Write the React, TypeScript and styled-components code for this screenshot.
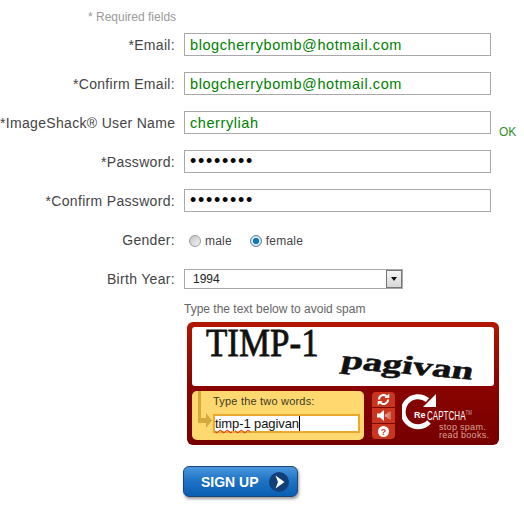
import React from "react";
import styled, { createGlobalStyle } from "styled-components";

const Global = createGlobalStyle`
  html, body { margin: 0; padding: 0; background: #fff; }
  body { font-family: "Liberation Sans", Arial, sans-serif; width: 524px; height: 506px; overflow: hidden; }
`;

const Form = styled.form`
  padding-top: 10px;
  display: flex;
  flex-direction: column;
`;
const Required = styled.div`
  margin: 0 0 9px 88px;
  height: 14px;
  font-size: 12px;
  line-height: 14px;
  color: #999;
`;
const Row = styled.div<{ $after?: number }>`
  display: flex;
  align-items: center;
  margin-bottom: ${(p) => p.$after ?? 16}px;
`;
const Label = styled.label`
  width: 176px;
  flex: none;
  box-sizing: border-box;
  text-align: right;
  padding-right: 1px;
  margin-right: 8px;
  font-size: 14px;
  line-height: 16px;
  letter-spacing: 0.32px;
  color: #444;
  white-space: nowrap;
`;
const TextBox = styled.input<{ $secret?: boolean }>`
  width: 307px;
  height: 23px;
  flex: none;
  box-sizing: border-box;
  border: 1px solid #a9a9a9;
  outline: none;
  padding: 0 5px;
  margin: 0;
  background: #fff;
  font-family: "Liberation Sans", Arial, sans-serif;
  font-size: ${(p) => (p.$secret ? 18 : 14.5)}px;
  letter-spacing: ${(p) => (p.$secret ? "1.7px" : "0.58px")};
  color: ${(p) => (p.$secret ? "#000" : "#008000")};
`;
const Ok = styled.span`
  margin: 14px 0 -5px 8px;
  font-size: 12px;
  line-height: 14px;
  color: #2f8f1f;
`;
const Choices = styled.div`
  display: flex;
  align-items: center;
  padding: 3px 0 0 5px;
`;
const Radio = styled.span<{ $on?: boolean }>`
  width: 12px;
  height: 12px;
  box-sizing: border-box;
  border-radius: 50%;
  border: 1px solid ${(p) => (p.$on ? "#5a7f9a" : "#9a9a9a")};
  background: ${(p) =>
    p.$on
      ? "radial-gradient(circle at 50% 50%, #1477b8 0 2.6px, #2a95cf 3px, #e8eef2 3.6px, #c9ced2 100%)"
      : "linear-gradient(135deg, #c4c4c4, #f4f4f4)"};
  margin-right: 4px;
  flex: none;
`;
const ChoiceText = styled.span`
  font-size: 12px;
  line-height: 14px;
  letter-spacing: 0.2px;
  color: #444;
  margin-right: 18px;
`;
const SelectBox = styled.div`
  width: 219px;
  height: 20px;
  box-sizing: border-box;
  border: 1px solid #a9a9a9;
  display: flex;
  align-items: center;
  justify-content: space-between;
  padding: 0 0 0 8px;
  font-size: 12px;
  color: #222;
`;
const SelectArrow = styled.span`
  width: 16px;
  height: 18px;
  box-sizing: border-box;
  border: 1px solid #777;
  background: linear-gradient(#f6f6f6, #d8d8d8);
  display: flex;
  align-items: center;
  justify-content: center;
  &::after {
    content: "";
    border-left: 3.5px solid transparent;
    border-right: 3.5px solid transparent;
    border-top: 4px solid #111;
  }
`;
const Hint = styled.div`
  margin: 0 0 6px 184px;
  font-size: 12px;
  line-height: 13px;
  color: #666;
`;
const Captcha = styled.div`
  margin-left: 187px;
  width: 312px;
  height: 123px;
  box-sizing: border-box;
  padding: 5px;
  border-radius: 6px;
  background: linear-gradient(#b31600 0, #8a0400 50%, #760000 100%);
  display: flex;
  flex-direction: column;
  gap: 5px;
`;
const Challenge = styled.div`
  height: 59px;
  background: #fff;
  border-radius: 3px;
  flex: none;
`;
const ChallengeArt = styled.svg`
  display: block;
  overflow: visible;
`;
const Lower = styled.div`
  display: flex;
  gap: 8px;
`;
const Panel = styled.div`
  position: relative;
  width: 172px;
  height: 49px;
  box-sizing: border-box;
  padding: 3px 4px 0 21px;
  border-radius: 5px;
  background: #ffd870;
`;
const PanelArrow = styled.svg`
  position: absolute;
  left: 3px;
  top: 0;
`;
const PanelLabel = styled.div`
  font-size: 11px;
  line-height: 14px;
  letter-spacing: 0.2px;
  color: #3a3a20;
  margin-bottom: 6px;
`;
const Answer = styled.div`
  width: 147px;
  height: 19px;
  box-sizing: border-box;
  border: 2px solid #e8a92c;
  background: #fff;
  padding-left: 0;
  font-size: 13px;
  line-height: 15px;
  letter-spacing: -0.1px;
  color: #111;
  white-space: nowrap;
`;
const Misspelled = styled.span`
  text-decoration: underline wavy #e02020 1px;
`;
const Caret = styled.span`
  border-right: 1px solid #000;
`;
const Tools = styled.div`
  width: 23px;
  height: 47px;
  margin-top: 1px;
  flex: none;
  border-radius: 4px;
  overflow: hidden;
  display: flex;
  flex-direction: column;
  gap: 1px;
  background: #7a0a00;
`;
const Tool = styled.div`
  flex: 1;
  background: #c9361f;
  display: flex;
  align-items: center;
  justify-content: center;
`;
const Logo = styled.div`
  position: relative;
  flex: 1;
  margin-left: -1px;
`;
const LogoMark = styled.svg`
  position: absolute;
  left: 0;
  top: 2px;
`;
const ReWord = styled.span`
  position: absolute;
  left: 12px;
  top: 19px;
  font-size: 9px;
  line-height: 10px;
  font-weight: bold;
  color: #fff;
`;
const Brand = styled.span`
  position: absolute;
  left: 25px;
  top: 18px;
  font-size: 13px;
  line-height: 14px;
  color: #fff;
  white-space: nowrap;
  transform: scaleX(0.62);
  transform-origin: 0 0;
`;
const Tm = styled.sup`
  font-size: 7px;
  line-height: 0;
  vertical-align: 5px;
  color: #d8a8a0;
`;
const Slogan = styled.span`
  position: absolute;
  left: 37px;
  top: 32px;
  font-size: 9px;
  line-height: 8px;
  letter-spacing: 0.3px;
  color: #d9a598;
  white-space: nowrap;
`;
const SignUp = styled.button`
  margin: 21px 0 0 183px;
  width: 115px;
  height: 31px;
  box-sizing: border-box;
  padding: 0 8px 0 17px;
  border: 1px solid #1d4474;
  border-radius: 6px;
  background: linear-gradient(#4a97dc 0, #1f74c6 45%, #0a5fb2 100%);
  box-shadow: 1px 2px 3px rgba(0, 0, 0, 0.4);
  display: flex;
  align-items: center;
  justify-content: space-between;
  font-family: "Liberation Sans", Arial, sans-serif;
  font-size: 14px;
  font-weight: bold;
  color: #fff;
`;

const App = () => (
  <>
    <Global />
    <Form onSubmit={(e) => e.preventDefault()}>
      <Required>* Required fields</Required>
      <Row>
        <Label>*Email:</Label>
        <TextBox readOnly value="blogcherrybomb@hotmail.com" />
      </Row>
      <Row>
        <Label>*Confirm Email:</Label>
        <TextBox readOnly value="blogcherrybomb@hotmail.com" />
      </Row>
      <Row>
        <Label>*ImageShack® User Name</Label>
        <TextBox readOnly value="cherryliah" />
        <Ok>OK</Ok>
      </Row>
      <Row>
        <Label>*Password:</Label>
        <TextBox $secret readOnly type="password" value="cherries" />
      </Row>
      <Row $after={19}>
        <Label>*Confirm Password:</Label>
        <TextBox $secret readOnly type="password" value="cherries" />
      </Row>
      <Row $after={21}>
        <Label>Gender:</Label>
        <Choices>
          <Radio />
          <ChoiceText>male</ChoiceText>
          <Radio $on />
          <ChoiceText>female</ChoiceText>
        </Choices>
      </Row>
      <Row $after={14}>
        <Label>Birth Year:</Label>
        <SelectBox>
          1994
          <SelectArrow />
        </SelectBox>
      </Row>
      <Hint>Type the text below to avoid spam</Hint>
      <Captcha>
        <Challenge>
          <ChallengeArt width="302" height="59" viewBox="0 0 302 59">
            <text transform="translate(14 29) scale(1 1.12)" fontFamily="'Liberation Serif', serif" fontSize="35" fill="#111" stroke="#111" strokeWidth="0.7">
              TIMP-1
            </text>
            <text transform="translate(148 41) rotate(5) skewX(-8) scale(1.5 1)" fontFamily="'Liberation Serif', serif" fontSize="26" fontWeight="bold" fill="#111" stroke="#111" strokeWidth="0.5">
              pagivan
            </text>
          </ChallengeArt>
        </Challenge>
        <Lower>
          <Panel>
            <PanelArrow width="18" height="49" viewBox="0 0 18 49">
              <path d="M3 0h3v27h5v-5l6 7.5-6 7.5v-5H3z" fill="#d4a93f" />
            </PanelArrow>
            <PanelLabel>Type the two words:</PanelLabel>
            <Answer>
              <Misspelled>timp-1</Misspelled> <Caret>pagivan</Caret>
            </Answer>
          </Panel>
          <Tools>
            <Tool>
              <svg width="13" height="13" viewBox="0 0 13 13" fill="none" stroke="#fff" strokeWidth="2">
                <path d="M2 6.5a4.5 4.5 0 0 1 7.5-3.3" />
                <path d="M11 6.5a4.5 4.5 0 0 1-7.5 3.3" />
                <path d="M7.5 5h4.8V.4zM5.5 8H.7v4.6z" fill="#fff" stroke="none" />
              </svg>
            </Tool>
            <Tool>
              <svg width="14" height="11" viewBox="0 0 14 11" fill="#fff">
                <path d="M0 3.5h3L7 0v11L3 7.5H0z" />
                <rect x="8.5" y="4" width="1" height="3" />
                <rect x="10.5" y="2.5" width="1" height="6" opacity="0.8" />
                <rect x="12.5" y="1.5" width="1" height="8" opacity="0.6" />
              </svg>
            </Tool>
            <Tool>
              <svg width="11" height="11" viewBox="0 0 11 11">
                <circle cx="5.5" cy="5.5" r="5.5" fill="#fff" />
                <text x="5.5" y="9" textAnchor="middle" fontFamily="'Liberation Sans', sans-serif" fontSize="9" fontWeight="bold" fill="#c9361f">?</text>
              </svg>
            </Tool>
          </Tools>
          <Logo>
            <LogoMark width="36" height="38" viewBox="0 0 36 38">
              <path d="M27 29a15 15 0 1 1-1.5-22" fill="none" stroke="#fff" strokeWidth="5" />
              <path d="M34 1v13H21z" fill="#fff" />
            </LogoMark>
            <ReWord>Re</ReWord>
            <Brand>CAPTCHA<Tm>TM</Tm></Brand>
            <Slogan>stop spam.<br />read books.</Slogan>
          </Logo>
        </Lower>
      </Captcha>
      <SignUp type="button">
        SIGN UP
        <svg width="20" height="20" viewBox="0 0 20 20">
          <circle cx="10" cy="10" r="10" fill="#123f78" />
          <path d="M6.5 3.5L15.5 10l-9 6.5L9 10z" fill="#fff" />
        </svg>
      </SignUp>
    </Form>
  </>
);

export default App;
